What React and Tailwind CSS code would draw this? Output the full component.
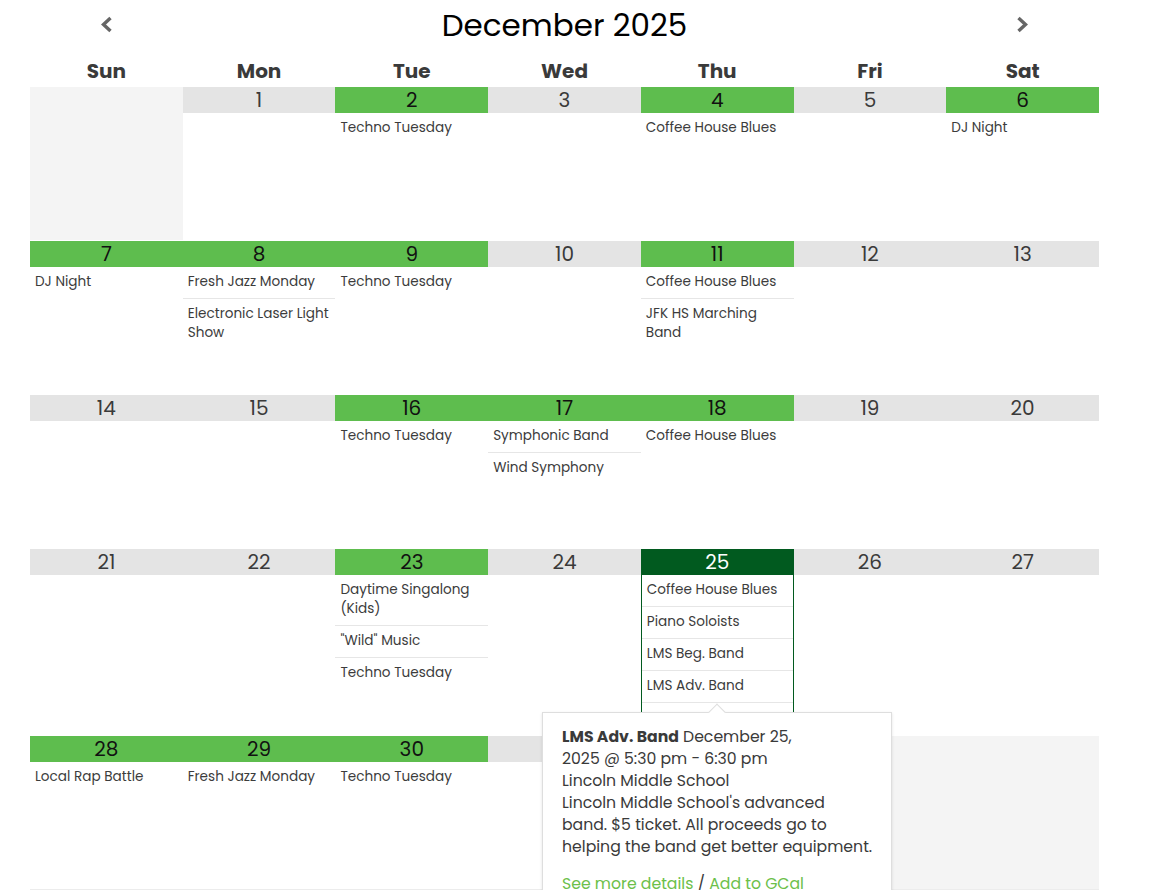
import React from 'react'

const days = ['Sun', 'Mon', 'Tue', 'Wed', 'Thu', 'Fri', 'Sat']

// null = day outside the month
const weeks = [
  [null, { d: 1 }, { d: 2, ev: ['Techno Tuesday'] }, { d: 3 }, { d: 4, ev: ['Coffee House Blues'] }, { d: 5 }, { d: 6, ev: ['DJ Night'] }],
  [
    { d: 7, ev: ['DJ Night'] },
    { d: 8, ev: ['Fresh Jazz Monday', 'Electronic Laser Light Show'] },
    { d: 9, ev: ['Techno Tuesday'] },
    { d: 10 },
    { d: 11, ev: ['Coffee House Blues', 'JFK HS Marching Band'] },
    { d: 12 },
    { d: 13 },
  ],
  [
    { d: 14 },
    { d: 15 },
    { d: 16, ev: ['Techno Tuesday'] },
    { d: 17, ev: ['Symphonic Band', 'Wind Symphony'] },
    { d: 18, ev: ['Coffee House Blues'] },
    { d: 19 },
    { d: 20 },
  ],
  [
    { d: 21 },
    { d: 22 },
    { d: 23, ev: ['Daytime Singalong (Kids)', '"Wild" Music', 'Techno Tuesday'] },
    { d: 24 },
    // last row sits under the tooltip
    { d: 25, today: true, ev: ['Coffee House Blues', 'Piano Soloists', 'LMS Beg. Band', 'LMS Adv. Band', '\u00a0'] },
    { d: 26 },
    { d: 27 },
  ],
  [
    { d: 28, ev: ['Local Rap Battle'] },
    { d: 29, ev: ['Fresh Jazz Monday'] },
    { d: 30, ev: ['Techno Tuesday'] },
    { d: 31 },
    null,
    null,
    null,
  ],
]

const Chevron = ({ dir }) => (
  <svg width="13" height="17" viewBox="0 0 13 17" fill="none">
    <polyline
      points={dir === 'left' ? '10.5,2 3.5,8.5 10.5,15' : '2.5,2 9.5,8.5 2.5,15'}
      stroke="#666"
      strokeWidth="3.4"
      strokeLinejoin="miter"
    />
  </svg>
)

const DayCell = ({ day }) => {
  if (!day) return <div className="bg-[#f4f4f4]" />

  const hasEvents = day.ev && day.ev.length > 0
  let barClass = 'bg-[#e4e4e4] text-[#3a3a3a]'
  if (day.today) barClass = 'bg-[#015a1f] text-white'
  else if (hasEvents) barClass = 'bg-[#5ebd4e] text-[#111]'

  return (
    <div className={day.today ? 'bg-white border border-[#015a1f] border-t-0' : 'bg-white'}>
      <div className={`h-[26px] flex items-center justify-center text-[20px] leading-none ${barClass}`}>
        {day.d}
      </div>
      {hasEvents && (
        <div className="divide-y divide-[#e6e6e6]">
          {day.ev.map((name, i) => (
            <div key={i} className="pl-[5px] pr-[4px] pt-[5px] pb-[7px] text-[13.6px] leading-[19px] text-[#3c3c3c]">
              {name}
            </div>
          ))}
        </div>
      )}
    </div>
  )
}

export default function App() {
  return (
    <div className="relative min-h-[890px] bg-white font-['Poppins','Inter',sans-serif] overflow-hidden">
      <div className="ml-[30px] w-[1069px]">
        {/* Month nav */}
        <div className="grid grid-cols-7 h-[48px] items-center">
          <div className="flex justify-center">
            <Chevron dir="left" />
          </div>
          <div className="col-span-5 text-center text-[31px] leading-none text-black pt-[3px]">December 2025</div>
          <div className="flex justify-center">
            <Chevron dir="right" />
          </div>
        </div>

        {/* Day names */}
        <div className="grid grid-cols-7 h-[39px] items-center pt-[6px]">
          {days.map(d => (
            <div key={d} className="text-center text-[20px] font-bold text-[#3a3a3a]">{d}</div>
          ))}
        </div>

        {/* Weeks */}
        {weeks.map((week, wi) => (
          <div
            key={wi}
            className={`grid grid-cols-7 min-h-[154px] border-b ${wi === weeks.length - 1 ? 'border-[#ececec]' : 'border-white'}`}
          >
            {week.map((day, di) => (
              <DayCell key={di} day={day} />
            ))}
          </div>
        ))}
      </div>

      {/* Event tooltip */}
      <div className="absolute left-[542px] top-[712px] w-[350px] bg-white border border-[#dedede] shadow-sm pl-[19px] pr-[17px] pt-[13px] pb-[20px] text-[15.7px] leading-[22px] text-[#3a3a3a]">
        <div className="absolute -top-[7px] left-[168px] w-[12px] h-[12px] bg-white border-l border-t border-[#dedede] rotate-45" />
        <p>
          <span className="font-bold">LMS Adv. Band</span> December 25,{' '}
          <span className="whitespace-nowrap">2025 @ 5:30 pm - 6:30 pm</span>
        </p>
        <p>Lincoln Middle School</p>
        <p>Lincoln Middle School's advanced band. $5 ticket. All proceeds go to helping the band get better equipment.</p>
        <p className="mt-[15px]">
          <span className="text-[#6cc04a]">See more details</span> / <span className="text-[#6cc04a]">Add to GCal</span>
        </p>
      </div>
    </div>
  )
}
